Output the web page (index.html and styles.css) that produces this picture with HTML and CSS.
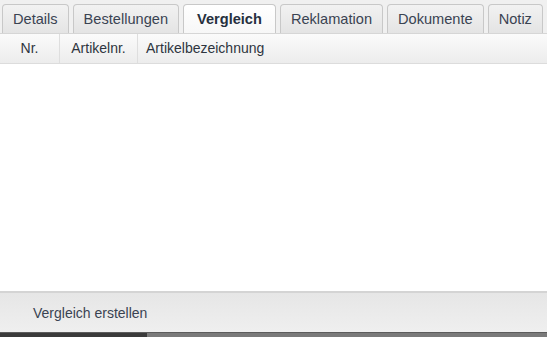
FILE: index.html
```html
<!DOCTYPE html>
<html lang="de">
<head>
  <meta charset="UTF-8">
  <title>Vergleich</title>
  <link rel="stylesheet" href="styles.css">
</head>
<body>
  <div class="panel">
    <ul class="tabs">
      <li class="tab">Details</li>
      <li class="tab">Bestellungen</li>
      <li class="tab active">Vergleich</li>
      <li class="tab">Reklamation</li>
      <li class="tab">Dokumente</li>
      <li class="tab">Notiz</li>
    </ul>
    <div class="grid-head">
      <div class="col col-nr">Nr.</div>
      <div class="col col-art">Artikelnr.</div>
      <div class="col col-name">Artikelbezeichnung</div>
    </div>
    <div class="grid-body"></div>
    <div class="toolbar">
      <a class="btn" href="javascript:;">Vergleich erstellen</a>
    </div>
    <div class="statusbar"><span class="thumb"></span></div>
  </div>
</body>
</html>
```
FILE: styles.css
```css
* {
  margin: 0;
  padding: 0;
  box-sizing: border-box;
}
html,
body {
  width: 100%;
  height: 100%;
  overflow: hidden;
}
body {
  font-family: "Liberation Sans", Arial, sans-serif;
  font-size: 14px;
  color: #2e3540;
  background: #ffffff;
}
.panel {
  display: flex;
  flex-direction: column;
  height: 100%;
}
.tabs {
  list-style: none;
  display: flex;
  gap: 4px;
  height: 34px;
  padding: 4px 0 0 2px;
  background: #f0f0f0;
  border-bottom: 1px solid #d6d6d6;
}
.tab {
  height: 29px;
  line-height: 29px;
  padding: 0 10px;
  font-size: 14.6px;
  border: 1px solid #c8c8c8;
  border-bottom: none;
  border-radius: 4px 4px 0 0;
  background: linear-gradient(#f2f2f2, #e4e4e4);
  color: #3a4352;
  white-space: nowrap;
}
.tab.active {
  padding: 0 13px;
  background: linear-gradient(#ffffff, #f7f7f7);
  font-weight: bold;
  color: #26303e;
}
.grid-head {
  display: flex;
  height: 30px;
  background: linear-gradient(#fbfbfb, #ececec);
  border-bottom: 1px solid #dcdcdc;
}
.col {
  line-height: 29px;
  border-right: 1px solid #dedede;
  white-space: nowrap;
}
.col-nr {
  width: 60px;
  text-align: center;
}
.col-art {
  width: 78px;
  text-align: center;
}
.col-name {
  padding-left: 8px;
  border-right: none;
}
.grid-body {
  flex: 1;
  background: #ffffff;
}
.toolbar {
  height: 41px;
  padding-left: 33px;
  display: flex;
  align-items: center;
  border-top: 2px solid #d4d4d4;
  background: linear-gradient(#e6e6e6, #efefef);
}
.btn {
  text-decoration: none;
  color: #3a4352;
}
.statusbar {
  height: 5px;
  background: #7a7a7a;
  border-top: 1px solid #5c5c5c;
}
.thumb {
  display: block;
  width: 147px;
  height: 100%;
  background: #3a3a3a;
}
```
